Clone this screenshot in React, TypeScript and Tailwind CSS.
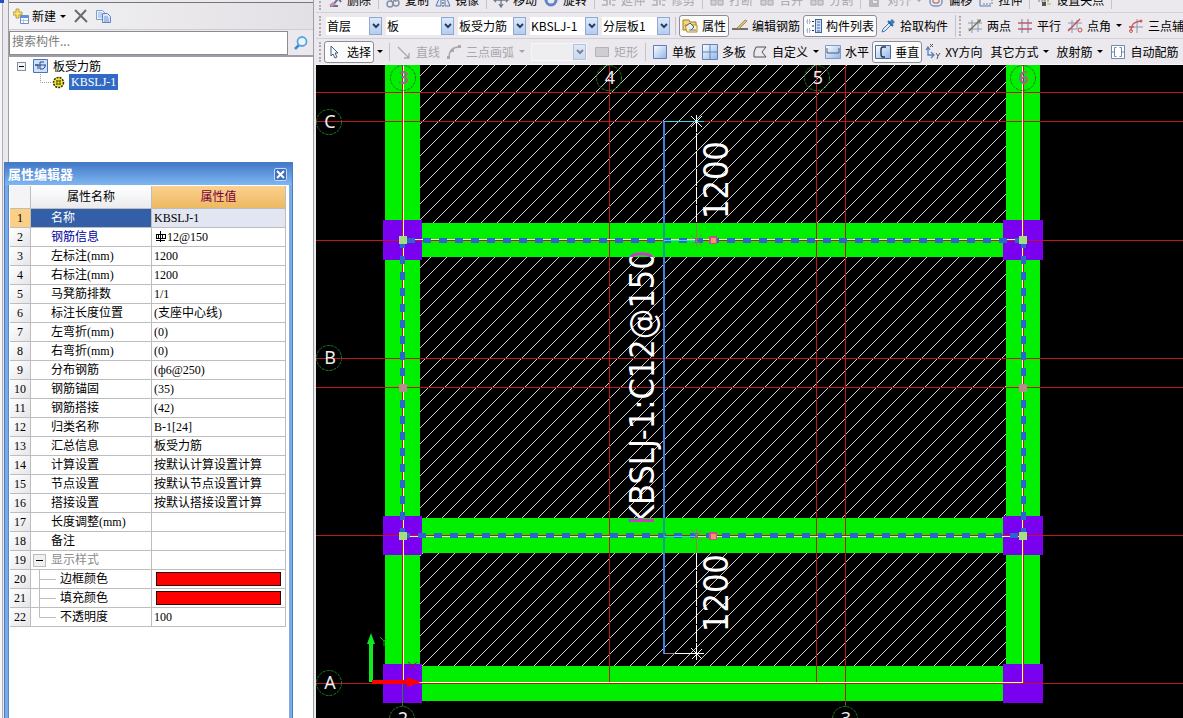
import type { ReactNode } from "react";

interface ToolProps {
  icon?: ReactNode;
  label: string;
  arrow?: boolean;
  active?: boolean;
  disabled?: boolean;
}

interface Property {
  name: string;
  value?: ReactNode;
  kind?: "selected" | "required" | "group" | "child";
}

const Icon = ({ children }: { children: ReactNode }) => (
  <svg width="16" height="16" viewBox="0 0 16 16" fill="none" className="shrink-0" aria-hidden="true">
    {children}
  </svg>
);

const BlueGradient = () => (
  <defs>
    <linearGradient id="blueFill" x1="0" y1="0" x2="1" y2="1">
      <stop offset="0" stopColor="#ffffff" />
      <stop offset="1" stopColor="#8fb4e6" />
    </linearGradient>
  </defs>
);

const icons = {
  remove: (
    <Icon>
      <path d="M3 14h8M9 3l5 7M14 3l-8 10" stroke="#66708a" strokeWidth="2" />
      <path d="M2 13l4-3 3 2-4 3z" fill="#c78bb8" />
    </Icon>
  ),
  copy: (
    <Icon>
      <path d="M5 1l6 9M11 1L6 9" stroke="#6c7890" />
      <circle cx="5" cy="12" r="3" stroke="#8392a8" strokeWidth="1.5" />
      <circle cx="11" cy="11" r="3" stroke="#8392a8" strokeWidth="1.5" />
    </Icon>
  ),
  mirror: (
    <Icon>
      <path d="M6 2v12H1zM10 2v12h5z" fill="#dce9fa" stroke="#5676a8" />
      <path d="M8 1v14" stroke="#444" strokeDasharray="2 1" />
    </Icon>
  ),
  move: (
    <Icon>
      <path d="M8 1v14M1 8h14M6 12l2 3 2-3M3 6L1 8l2 2M13 6l2 2-2 2M6 3l2-2 2 2" stroke="#66788f" strokeWidth="1.3" />
    </Icon>
  ),
  rotate: (
    <Icon>
      <circle cx="8" cy="8" r="5" stroke="#5f83c9" strokeWidth="3" />
    </Icon>
  ),
  edit: (
    <Icon>
      <path d="M2 8h4v5H1M9 3v10M11 8h4M11 13h3" stroke="#b0aeb3" strokeWidth="1.5" />
    </Icon>
  ),
  blocks: (
    <Icon>
      <path d="M2 8h5v5H2zM9 8h5v5H9z" fill="#d4d2d6" stroke="#a9a7ac" />
    </Icon>
  ),
  align: (
    <Icon>
      <path d="M3 2v12h9M5 5h6v7H5zM7 8h3" stroke="#a9a7ac" strokeWidth="1.5" />
    </Icon>
  ),
  offset: (
    <Icon>
      <rect x="2" y="2" width="12" height="12" rx="4" stroke="#7898c8" strokeWidth="1.5" />
      <rect x="5" y="5" width="6" height="6" rx="2" stroke="#c08078" strokeWidth="1.5" />
    </Icon>
  ),
  stretch: (
    <Icon>
      <path d="M2 3v11h11" stroke="#557ab8" />
      <path d="M5 12h9V4" stroke="#6c86b0" strokeDasharray="2 1" />
    </Icon>
  ),
  grips: (
    <Icon>
      <path d="M2 9h12M8 2v7" stroke="#777" strokeDasharray="2 1" />
      <path d="M6 10h4v4H6z" fill="#555" />
      <path d="M11 11h4v2h-4z" fill="#d9cf72" />
    </Icon>
  ),
  property: (
    <Icon>
      <path d="M1 2h6l1 2h6v8H1z" fill="#f5d671" stroke="#9b7b25" />
      <path d="M3 7h12v7H5z" fill="#fdf3c3" stroke="#b08d32" />
      <path d="M4 8l4-3 4 4-3 3" stroke="#4c5e78" fill="#e7edf7" />
      <path d="M7 12h7" stroke="#55739f" />
    </Icon>
  ),
  editBar: (
    <Icon>
      <path d="M0 11h16" stroke="#444" strokeWidth="1.5" />
      <path d="M5 10L13 2l2 1-8 8z" fill="#e0c172" stroke="#897341" strokeWidth=".7" />
    </Icon>
  ),
  list: (
    <Icon>
      <path d="M1 2h3v3H1zM1 11h3v3H1z" stroke="#5878aa" strokeDasharray="1 1" />
      <path d="M6 3.500h2M6 8h2M6 12.500h2" stroke="#333" />
      <rect x="9.500" y="1.500" width="6" height="13" fill="#cfe0f8" stroke="#3f65a0" />
      <path d="M11 4h3M11 7h3M11 10h3M11 13h3" stroke="#456da9" />
    </Icon>
  ),
  pick: (
    <Icon>
      <path d="M2 14l1-3 6-6 2 2-6 6z" fill="#d9eafb" stroke="#4c79ad" />
      <path d="M8 3l5 5" stroke="#2d629d" strokeWidth="2" />
      <path d="M11 5l2.500-2.500" stroke="#3f7fc0" strokeWidth="4" />
    </Icon>
  ),
  twoPoint: (
    <Icon>
      <path d="M1 5h14M1 11h14M5 2v13M11 1v13" stroke="#8796b4" />
      <path d="M2 13L13 2" stroke="#79724c" strokeWidth="1.4" />
      <path d="M11 3l3-2-1 4z" fill="#79724c" />
    </Icon>
  ),
  parallel: (
    <Icon>
      <path d="M5 1v14M11 1v14" stroke="#8796b4" strokeWidth="1.3" />
      <path d="M1 5h14M1 11h14" stroke="#c05b64" strokeWidth="1.3" />
    </Icon>
  ),
  angle: (
    <Icon>
      <path d="M1 5h14M1 11h9M5 2v13M10 2v9" stroke="#8796b4" />
      <path d="M1 13L13 1" stroke="#c94d55" strokeWidth="1.4" />
      <circle cx="13" cy="12" r="2" stroke="#c94d55" />
    </Icon>
  ),
  threePoint: (
    <Icon>
      <path d="M1 9h14M9 1v14" stroke="#8796b4" />
      <path d="M3 13c0-6 2-9 10-10M1 9h5" stroke="#cf5a58" strokeWidth="1.4" />
      <circle cx="13" cy="3" r="1.500" fill="#cf5a58" />
      <circle cx="3" cy="13" r="1.500" stroke="#cf5a58" />
    </Icon>
  ),
  pointer: (
    <Icon>
      <path d="M4 2l7 7H8l2 4-2 1-2-4-2 2z" fill="#ffffff" stroke="#405c86" />
    </Icon>
  ),
  line: (
    <Icon>
      <path d="M2 3l11 11M13 9v5H8" stroke="#aaa8ad" strokeWidth="1.3" />
    </Icon>
  ),
  arc: (
    <Icon>
      <path d="M3 14C3 7 6 3 13 3" stroke="#aaa8ad" strokeWidth="1.5" />
      <path d="M1 12h3v3H1zM5 5h3v3H5zM12 1h3v3h-3z" fill="#aaa8ad" />
    </Icon>
  ),
  rect: (
    <Icon>
      <path d="M1.5 3.500h13v9h-13z" fill="#cfcdd0" stroke="#b5b3b7" />
    </Icon>
  ),
  single: (
    <Icon>
      <BlueGradient />
      <path d="M1.500 1.500h13v13h-13z" fill="url(#blueFill)" stroke="#5d7fc0" />
    </Icon>
  ),
  multi: (
    <Icon>
      <path d="M.5.5h15v15H.5z" fill="url(#blueFill)" stroke="#5d84b5" />
      <path d="M8 1v14M1 8h14" stroke="#5d84b5" />
    </Icon>
  ),
  custom: (
    <Icon>
      <path d="M4 3h10l-4 5 4 5H2V8z" stroke="#4f5058" />
    </Icon>
  ),
  horizontal: (
    <Icon>
      <path d="M.5 1.500h15v13H.5z" fill="url(#blueFill)" stroke="#7f9cd0" />
      <path d="M2 4v5h12V4" stroke="#4e5c72" />
    </Icon>
  ),
  vertical: (
    <Icon>
      <path d="M.5 1.500h15v13H.5z" fill="url(#blueFill)" stroke="#4a6aa5" />
      <path d="M11 3H8Q6 3 6 6v4q0 3 2 3h2" stroke="#26354e" strokeWidth="1.4" />
    </Icon>
  ),
  xy: (
    <Icon>
      <path d="M3 4v7h6M1 6l2-3 2 3M6 8l3 3-3 3" stroke="#5482c0" strokeWidth="1.3" />
      <path d="M5 0l3 3M8 0L5 3M11 9l2 3 2-3M13 12l-1 3" stroke="#555" />
    </Icon>
  ),
  auto: (
    <Icon>
      <path d="M1.500 1.500h13v13h-13z" fill="#fff" stroke="#6f88ac" />
      <path d="M6.500 3.500h-2v9h2M9.500 3.500h2v9h-2M2 8h3M11 8h3" stroke="#6f88ac" />
    </Icon>
  ),
};

const properties: Property[] = [
  { name: "名称", value: "KBSLJ-1", kind: "selected" },
  { name: "钢筋信息", value: "rebar", kind: "required" },
  { name: "左标注(mm)", value: "1200" },
  { name: "右标注(mm)", value: "1200" },
  { name: "马凳筋排数", value: "1/1" },
  { name: "标注长度位置", value: "(支座中心线)" },
  { name: "左弯折(mm)", value: "(0)" },
  { name: "右弯折(mm)", value: "(0)" },
  { name: "分布钢筋", value: "(ф6@250)" },
  { name: "钢筋锚固", value: "(35)" },
  { name: "钢筋搭接", value: "(42)" },
  { name: "归类名称", value: "B-1[24]" },
  { name: "汇总信息", value: "板受力筋" },
  { name: "计算设置", value: "按默认计算设置计算" },
  { name: "节点设置", value: "按默认节点设置计算" },
  { name: "搭接设置", value: "按默认搭接设置计算" },
  { name: "长度调整(mm)" },
  { name: "备注" },
  { name: "显示样式", kind: "group" },
  { name: "边框颜色", value: "red", kind: "child" },
  { name: "填充颜色", value: "red", kind: "child" },
  { name: "不透明度", value: "100", kind: "child" },
];

const Arrow = () => (
  <span className="w-[7px] shrink-0 flex justify-center">
    <span className="border-x-[3px] border-t-[3px] border-x-transparent border-t-current" />
  </span>
);

const Grip = () => (
  <span className="w-2 h-[20px] shrink-0 flex justify-center">
    <span className="border-l-2 border-dotted border-[#aeacb2]" />
  </span>
);

const Sep = () => (
  <span className="w-2 h-[18px] shrink-0 flex justify-center">
    <span className="border-l border-[#c5c3c9]" />
  </span>
);

const Tool = ({ icon, label, arrow, active, disabled }: ToolProps) => (
  <button
    type="button"
    disabled={disabled}
    className={`h-[22px] px-[2px] shrink-0 flex items-center gap-1 whitespace-nowrap border ${
      active ? "bg-[#fbfbfc] border-[#8f8d94] rounded-[3px]" : "border-transparent"
    } ${disabled ? "text-[#a8a6aa]" : "text-black"}`}
  >
    {icon}
    <span>{label}</span>
    {arrow && <Arrow />}
  </button>
);

const Combo = ({
  label,
  value,
  width,
  disabled,
}: {
  label: string;
  value: string;
  width: string;
  disabled?: boolean;
}) => (
  <label
    className={`${width} h-[18px] shrink-0 flex items-center ${
      disabled ? "bg-[#f1f0f3] border border-white opacity-60" : "bg-white"
    }`}
  >
    <select
      aria-label={label}
      disabled={disabled}
      defaultValue={value}
      className="appearance-none flex-1 min-w-0 h-4 pl-px outline-none text-black"
    >
      <option>{value}</option>
    </select>
    <span className="w-[13px] h-full flex items-center justify-center bg-linear-to-b from-[#dce9fb] to-[#b3cdf3] border border-[#8fa9cf] pointer-events-none">
      <svg width="8" height="6" viewBox="0 0 8 6" fill="none" aria-hidden="true">
        <path d="M1 1l3 3 3-3" stroke="#2d3e60" strokeWidth="2" />
      </svg>
    </span>
  </label>
);

const Toolbars = () => (
  <header className="bg-[#ebe9ed] border-b border-[#f6f5f7]">
    <div className="h-[13px] flex items-end overflow-hidden border-b border-[#d2d0d6]">
      <div className="h-6 shrink-0 flex items-center">
        <Grip />
        <Tool icon={icons.remove} label="删除" />
        <Sep />
        <Tool icon={icons.copy} label="复制" />
        <Tool icon={icons.mirror} label="镜像" />
        <Sep />
        <Tool icon={icons.move} label="移动" />
        <Tool icon={icons.rotate} label="旋转" />
        <Sep />
        <Tool icon={icons.edit} label="延伸" disabled />
        <Tool icon={icons.edit} label="修剪" disabled />
        <Sep />
        <Tool icon={icons.blocks} label="打断" disabled />
        <Tool icon={icons.blocks} label="合并" disabled />
        <Tool icon={icons.blocks} label="分割" disabled />
        <Sep />
        <Tool icon={icons.align} label="对齐" arrow disabled />
        <Tool icon={icons.offset} label="偏移" />
        <Tool icon={icons.stretch} label="拉伸" />
        <Sep />
        <Tool icon={icons.grips} label="设置夹点" />
        <Sep />
      </div>
    </div>
    <div className="h-[26px] flex items-center overflow-hidden border-b border-[#d2d0d6]">
      <Grip />
      <div className="ml-[2px] mr-px flex gap-1">
        <Combo label="楼层" value="首层" width="w-[56px]" />
        <Combo label="构件类别" value="板" width="w-[68px]" />
        <Combo label="构件类型" value="板受力筋" width="w-[68px]" />
        <Combo label="构件" value="KBSLJ-1" width="w-[68px]" />
        <Combo label="分层" value="分层板1" width="w-[68px]" />
      </div>
      <Sep />
      <Tool icon={icons.property} label="属性" active />
      <Tool icon={icons.editBar} label="编辑钢筋" />
      <Tool icon={icons.list} label="构件列表" active />
      <Tool icon={icons.pick} label="拾取构件" />
      <div className="ml-1 flex items-center border-l border-[#c5c3c9]">
        <Grip />
        <Tool icon={icons.twoPoint} label="两点" />
        <Tool icon={icons.parallel} label="平行" />
        <Tool icon={icons.angle} label="点角" arrow />
        <Tool icon={icons.threePoint} label="三点辅轴" />
      </div>
    </div>
    <div className="h-[25px] flex items-center overflow-hidden">
      <Grip />
      <Tool icon={icons.pointer} label="选择" active />
      <button type="button" aria-label="选择方式" className="px-[2px]">
        <Arrow />
      </button>
      <Sep />
      <Tool icon={icons.line} label="直线" disabled />
      <Tool icon={icons.arc} label="三点画弧" arrow disabled />
      <div className="ml-[3px] mr-1">
        <Combo label="画弧参数" value="" width="w-[56px]" disabled />
      </div>
      <Tool icon={icons.rect} label="矩形" disabled />
      <Sep />
      <Tool icon={icons.single} label="单板" />
      <Tool icon={icons.multi} label="多板" />
      <Tool icon={icons.custom} label="自定义" arrow />
      <Tool icon={icons.horizontal} label="水平" />
      <Tool icon={icons.vertical} label="垂直" active />
      <Tool icon={icons.xy} label="XY方向" />
      <div className="ml-[2px] flex gap-px">
        <Tool label="其它方式" arrow />
        <Tool label="放射筋" arrow />
        <Tool icon={icons.auto} label="自动配筋" />
      </div>
    </div>
  </header>
);

const columns = [383, 1003];
const columnRows = [220, 516, 664];
const gridRows = [92, 121, 240, 358, 387, 535, 683];
const gridColumns = [
  { x: 402, height: 618 },
  { x: 609, height: 618 },
  { x: 816, height: 618 },
  { x: 845, height: 638 },
  { x: 1023, height: 618 },
];
const axes = [
  { x: 329, y: 122, label: "C" },
  { x: 329, y: 358, label: "B" },
  { x: 329, y: 683, label: "A" },
  { x: 403, y: 78, label: "3", dim: true },
  { x: 609, y: 78, label: "4" },
  { x: 817, y: 78, label: "5" },
  { x: 1023, y: 78, label: "6", dim: true },
  { x: 402, y: 719, label: "2" },
  { x: 845, y: 719, label: "3" },
];

const Drawing = () => (
  <svg
    viewBox="316 65 867 653"
    preserveAspectRatio="xMinYMin slice"
    className="block w-full flex-1 min-h-0 bg-black"
    role="img"
    aria-label="板受力筋平面图"
  >
    <defs>
      <pattern id="hatch" width="16" height="16" patternUnits="userSpaceOnUse">
        <path d="M0 16L16 0" stroke="#d0d0d0" strokeWidth="1" shapeRendering="crispEdges" />
      </pattern>
      <linearGradient id="labelFill" gradientUnits="userSpaceOnUse" x1="0" y1="0" x2="280" y2="0">
        <stop offset="0.025" stopColor="#c23fc2" />
        <stop offset="0.025" stopColor="#ffffff" />
        <stop offset="0.957" stopColor="#ffffff" />
        <stop offset="0.957" stopColor="#c23fc2" />
      </linearGradient>
    </defs>

    <g shapeRendering="crispEdges">
      <path d="M420 65h586v601H420z" fill="url(#hatch)" />
      <path
        d="M385 65h35v638h-35zM1006 65h34v638h-34zM420 223h586v34H420zM420 518h586v35H420zM420 666h586v35H420z"
        fill="#00f000"
      />
      {columns.map((x) =>
        columnRows.map((y) => (
          <rect key={`${x}-${y}`} x={x} y={y} width={x === 383 ? 39 : 40} height={y === 220 ? 40 : 39} fill="#7a00f0" />
        ))
      )}

      {/* axis grid */}
      {gridRows.map((y) => (
        <rect key={y} x="316" y={y} width="867" height="1" fill="#c01818" />
      ))}
      {gridColumns.map((line) => (
        <rect key={line.x} x={line.x} y="65" width="1" height={line.height} fill="#c01818" />
      ))}
      <path d="M402 683h1v23h-1zM845 703h1v3h-1z" fill="#1c8a1c" />

      {/* pale outline of the slab */}
      <path
        d="M403 65h1v617h-1zM1022 65h1v617h-1zM403 682h620v1H403zM403 239h620v1H403zM403 536h620v1H403z"
        fill="#fff8d8"
      />

      {/* selected slab edge */}
      <g stroke="#2c66cc" strokeWidth="5" fill="none" strokeDasharray="8 8">
        <path d="M407 240.500h612M402 535.500h617" />
        <path d="M402.500 240v296M1023.500 240v296" />
      </g>

      {/* bar with its two dimension lines */}
      <path d="M664 121v533" stroke="#3f7fe0" strokeWidth="2" />
      <path d="M664 224v33M664 518v35" stroke="#12a08c" strokeWidth="2" />
      <path d="M664 121h40v1h-40zM664 240h31v1h-31zM664 536h31v1h-31z" fill="#35d8ea" />
      <path d="M664 653h11v1h-11z" fill="#a87db0" />
      <path d="M675 653h29v1h-29z" fill="#ffffff" />
      <path d="M696.500 115v108M696.500 553v108" stroke="#ffffff" strokeDasharray="17 1" />
      <path d="M696.500 223v23M696.500 529v24" stroke="#9a7a5c" />
      <path d="M691 116l11 11M691 127l11-11M691 648l11 11M692 659l10-10" stroke="#ffffff" />
      <path d="M691 235l11 11M691 246l11-11M691 530l11 11M691 541l11-11" stroke="#9a7a5c" />

      {[240, 536].map((y) => (
        <g key={y}>
          <rect x="399" y={y - 4} width="8" height="8" fill="#a2de82" />
          <rect x="1019" y={y - 4} width="8" height="8" fill="#a2de82" />
          <rect x="709" y={y - 4} width="8" height="8" fill="#cc4a98" />
          <rect x="711" y={y - 2} width="5" height="5" fill="#ef9a62" />
        </g>
      ))}
      <rect x="399" y="384" width="8" height="8" fill="#b98a8a" />
      <rect x="1019" y="384" width="8" height="8" fill="#b98a8a" />
    </g>

    {axes.map((axis) => (
      <g key={`${axis.x}-${axis.y}`}>
        <circle cx={axis.x} cy={axis.y} r="12.500" fill="none" stroke="#1f7a1f" strokeDasharray="3 1" />
        <text
          x={axis.x + 1}
          y={axis.y + 6}
          textAnchor="middle"
          fill={axis.dim ? "#8d7482" : "#ececec"}
          className={`text-[18px] font-['Noto_Sans'] ${axis.dim ? "font-bold" : ""}`}
        >
          {axis.label}
        </text>
      </g>
    ))}

    <g className="text-[34px] font-['DejaVu_Sans_Condensed','DejaVu_Sans']" fill="#ffffff">
      <text transform="translate(728 219) rotate(-90)">1200</text>
      <text transform="translate(728 632) rotate(-90)">1200</text>
      <text transform="translate(654 525) rotate(-90)" fill="url(#labelFill)">
        KBSLJ-1:C12@150
      </text>
    </g>

    {/* origin marker */}
    <path d="M371 682v-40" stroke="#10e820" strokeWidth="4" />
    <path d="M367 644l4-11 4 11z" fill="#10e820" />
    <path d="M372 682h36" stroke="#ff0000" strokeWidth="4" />
    <path d="M407 677l14 5-14 5z" fill="#ff0000" />
    <path d="M380 637l4 4v5M384 641l2-2" stroke="#10a020" fill="none" />
    <path d="M408 662l9 8M417 662l-9 8" stroke="#a01060" />
  </svg>
);

const PropertyRow = ({ item, index }: { item: Property; index: number }) => {
  const selected = item.kind === "selected";
  const cell = "h-[19px] p-0 border-r border-b border-[#bdbdbd] whitespace-nowrap";

  return (
    <tr>
      <th
        scope="row"
        className={`${cell} font-normal text-center ${
          selected ? "bg-[#fbcf85]" : "bg-linear-to-br from-white to-[#e6e6ea]"
        }`}
      >
        {index + 1}
      </th>
      <td
        className={`${cell} ${selected ? "bg-[#335ea8] text-white" : ""} ${
          item.kind === "required" ? "text-[#0000a0]" : ""
        } ${item.kind === "group" ? "text-[#8c8c8c]" : ""}`}
      >
        <div className="h-[18px] flex items-center">
          {item.kind === "group" && (
            <button
              type="button"
              aria-label="折叠"
              className="ml-[2px] mr-[5px] w-[13px] h-[13px] bg-[#f0f0f0] border border-[#bdbdbd] flex items-center justify-center"
            >
              <span className="w-[7px] h-px bg-black" />
            </button>
          )}
          {item.kind === "child" && (
            <svg width="29" height="18" viewBox="0 0 29 18" className="shrink-0" aria-hidden="true">
              <path d={index === 21 ? "M8.500 0v9.500H25" : "M8.500 0v18M8.500 9.500H25"} stroke="#bdbdbd" fill="none" />
            </svg>
          )}
          <span className={item.kind === "group" || item.kind === "child" ? "" : "pl-5"}>{item.name}</span>
        </div>
      </td>
      <td className={`${cell} pl-[2px] ${selected ? "bg-[#e1e6f2]" : ""}`}>
        {item.value === "red" && <div className="ml-[2px] mr-1 h-[14px] bg-[#ff0000] border border-[#300000]" />}
        {item.value === "rebar" && (
          <div className="flex items-center">
            <svg width="13" height="12" viewBox="0 0 13 12" aria-hidden="true">
              <path d="M2 3.500h9v4H2zM6.500 0v11M4.500 3v5M8.500 3v5M2 9.500h9" stroke="#000" fill="none" shapeRendering="crispEdges" />
            </svg>
            12@150
          </div>
        )}
        {item.value !== "red" && item.value !== "rebar" && item.value}
      </td>
    </tr>
  );
};

const PropertyEditor = () => (
  <section className="absolute left-1 top-[162px] bottom-0 w-[289px] flex flex-col bg-[#7aaae6] border border-b-0 border-[#4a7cc4]">
    <div className="h-[22px] shrink-0 pl-[3px] pr-[5px] flex items-center justify-between bg-linear-to-b from-[#4379c9] to-[#7fb7f1]">
      <h2 className="text-[13px] font-bold text-white">属性编辑器</h2>
      <button
        type="button"
        aria-label="关闭"
        className="w-[13px] h-[13px] bg-[#3f70bb] border border-[#c3dbf8] rounded-[2px] flex items-center justify-center"
      >
        <svg width="9" height="9" viewBox="0 0 9 9" aria-hidden="true">
          <path d="M1 1l7 7M8 1L1 8" stroke="#fff" strokeWidth="2" />
        </svg>
      </button>
    </div>
    <div className="flex-1 mx-[3px] pl-px pt-px bg-white border-l border-[#5a87c8]">
      <table className="w-[276px] table-fixed border-separate border-spacing-0 leading-[18px] font-['Liberation_Serif','Noto_Sans_CJK_SC',serif]">
        <colgroup>
          <col className="w-[21px]" />
          <col className="w-[121px]" />
          <col className="w-[134px]" />
        </colgroup>
        <thead>
          <tr>
            <th aria-label="序号" className="h-[23px] p-0 border-r border-b border-[#bdbdbd] bg-[#f4f4f6]" />
            <th className="p-0 border-r border-b border-[#bdbdbd] bg-linear-to-b from-white to-[#ebebee] font-normal">
              属性名称
            </th>
            <th className="p-0 border-r border-b border-[#bdbdbd] bg-linear-to-b from-[#fbd18e] to-[#edb961] font-normal text-[#7a0040]">
              属性值
            </th>
          </tr>
        </thead>
        <tbody>
          {properties.map((item, index) => (
            <PropertyRow key={item.name} item={item} index={index} />
          ))}
        </tbody>
      </table>
    </div>
  </section>
);

const ComponentList = () => (
  <aside className="relative w-[316px] shrink-0 flex bg-[#ebe9ed]">
    <div className="w-2 shrink-0">
      <div className="w-1 h-[3px] bg-[#1c50c8]" />
      <div className="w-[3px] h-full bg-[#f6f5f7] border-r border-[#b0aeb4]" />
    </div>
    <div className="w-[306px] flex flex-col border-x border-[#a09ea5]">
      <div className="h-[3px] shrink-0 border-b border-[#77757c]" />
      <div className="h-[27px] shrink-0 px-1 flex items-center gap-[3px] bg-linear-to-r from-[#f3f2f4] to-[#e2e0e4] border-b border-[#cfcdd2]">
        <button type="button" className="flex items-center gap-[3px]">
          <Icon>
            <path d="M3 1h3v3h3v3H6v3H3V7H0V4h3z" fill="#f7e06c" stroke="#a98d2a" strokeWidth=".8" />
            <path d="M7.500 7.500h8v8h-8z" fill="#fff" stroke="#6b8dc4" />
            <path d="M7 8h9v2H7z" fill="#5f8fdd" />
            <path d="M10.500 11v4M8 12.500h7" stroke="#a9c0e4" />
          </Icon>
          <span>新建</span>
          <Arrow />
        </button>
        <button type="button" aria-label="删除" className="ml-1 mr-[3px]">
          <Icon>
            <path d="M2 2l12 12M13 2L2 14" stroke="#6b6b6e" strokeWidth="2" />
          </Icon>
        </button>
        <button type="button" aria-label="复制">
          <Icon>
            <path d="M1.500 2.500h6l2 2v7h-8z" fill="#eaf2fd" stroke="#7d9dd0" />
            <path d="M3 5h4M3 7h5M3 9h5" stroke="#8facd8" />
            <path d="M7.500 5.500h5l3 3v6h-8z" fill="#dbe8fb" stroke="#5f84c0" />
            <path d="M9 9h4M9 11h5M9 13h5" stroke="#7396cc" />
          </Icon>
        </button>
      </div>
      <div className="h-[27px] shrink-0 flex items-center border-b-2 border-[#a09ea5]">
        <input
          type="text"
          aria-label="搜索构件"
          placeholder="搜索构件..."
          className="w-[279px] h-[24px] pl-[2px] pb-1 bg-white border border-[#8d8b92] outline-none placeholder:text-[#7b7b7b]"
        />
        <button type="button" aria-label="搜索" className="flex-1 flex justify-center">
          <Icon>
            <path d="M6 10l-4 4" stroke="#3c8ccc" strokeWidth="2.500" />
            <circle cx="9" cy="6.500" r="4.500" fill="#e9f6ff" stroke="#58a7dd" strokeWidth="1.800" />
          </Icon>
        </button>
      </div>
      <ul className="flex-1 pt-px pl-2 bg-white">
        <li>
          <div className="h-4 flex items-center">
            <button
              type="button"
              aria-label="折叠"
              className="w-[9px] h-[9px] border border-[#7f8fa6] bg-[#f4f4f2] flex items-center justify-center"
            >
              <span className="w-[5px] h-px bg-black" />
            </button>
            <svg width="15" height="14" viewBox="0 0 15 14" className="ml-[7px] mr-[5px]" aria-hidden="true">
              <path d="M.5.5h14v13H.5z" fill="#cfe0f8" stroke="#4c73b4" />
              <path d="M2 6h3v4M2 6h11M11 3H7v7h3l2-2V6" stroke="#27498a" fill="none" />
            </svg>
            <span>板受力筋</span>
          </div>
          <ul>
            <li className="h-4 flex items-center">
              <svg width="13" height="16" viewBox="0 0 13 16" className="ml-[22px]" aria-hidden="true">
                <path d="M1.500 0v8.500H13" stroke="#9c9c9c" strokeDasharray="1 1" fill="none" />
              </svg>
              <svg width="13" height="13" viewBox="0 0 13 13" className="mr-[4px]" aria-hidden="true">
                <circle cx="6.500" cy="6.500" r="5" fill="#f2e630" stroke="#2c2a0c" strokeWidth="1.500" strokeDasharray="2 1" />
                <path d="M5 4v5M8 4v5M4 5h5M4 8h5" stroke="#5c5610" />
              </svg>
              <span className="w-[49px] h-4 pl-[2px] leading-4 bg-[#316ac5] text-white font-['Liberation_Serif'] whitespace-nowrap">
                KBSLJ-1
              </span>
            </li>
          </ul>
        </li>
      </ul>
    </div>
    <PropertyEditor />
  </aside>
);

export default function App() {
  return (
    <div className="h-screen flex overflow-hidden bg-[#ebe9ed] text-black text-[12px] leading-4 font-['Noto_Sans_CJK_SC',sans-serif]">
      <ComponentList />
      <main className="flex-1 min-w-0 flex flex-col">
        <Toolbars />
        <Drawing />
      </main>
    </div>
  );
}
